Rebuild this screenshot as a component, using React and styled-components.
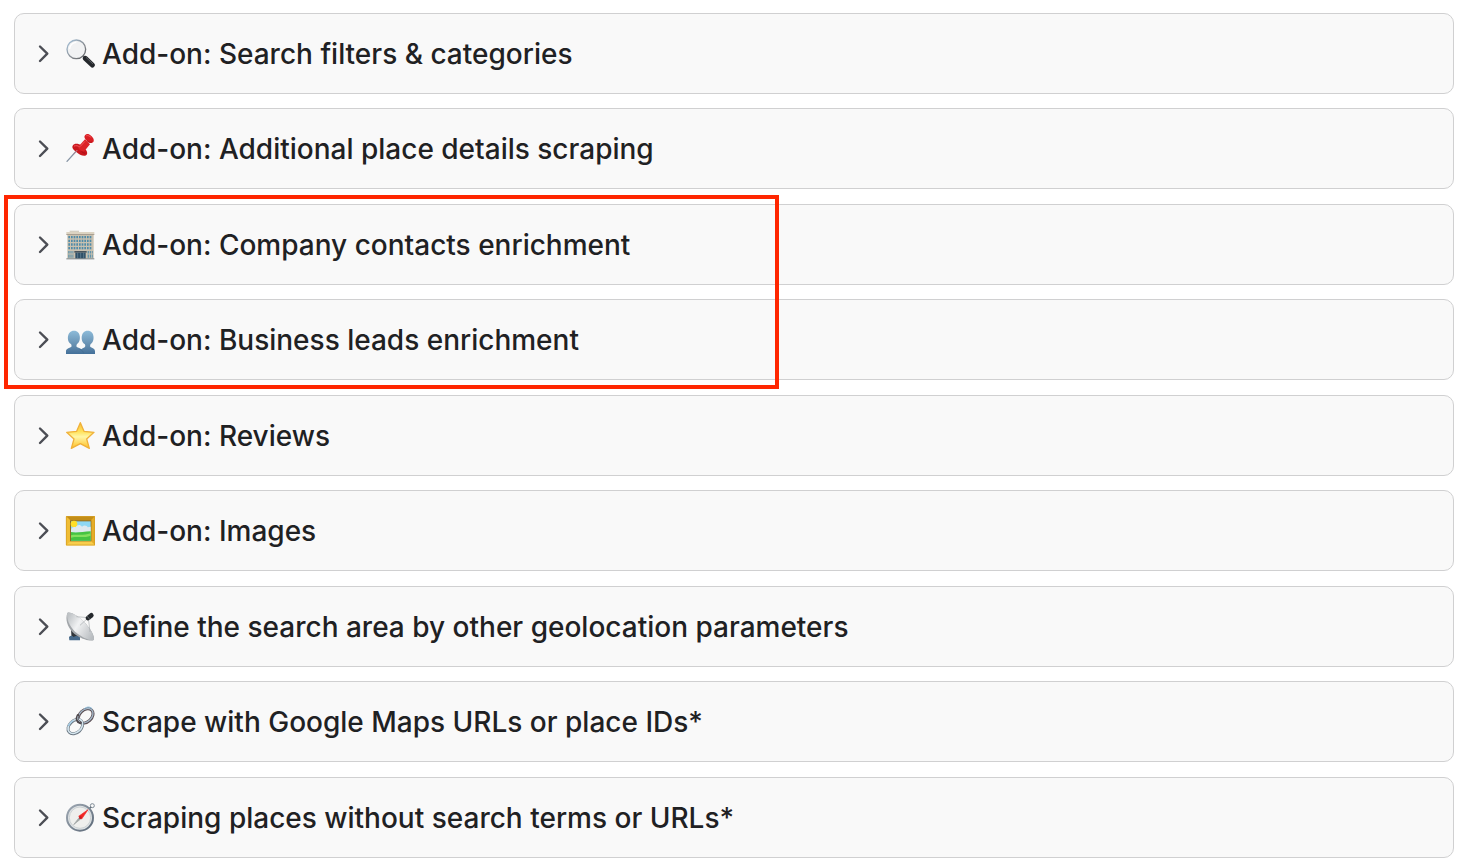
import React, { useState } from "react";
import styled, { createGlobalStyle } from "styled-components";

const GlobalStyle = createGlobalStyle`
  body {
    margin: 0;
    background-color: #ffffff;
    font-family: "Inter", "Liberation Sans", sans-serif;
  }
`;

const Page = styled.main`
  display: flex;
  flex-direction: column;
  gap: 15px;
  padding: 13px 16px 9px 14px;
`;

const Group = styled.section`
  position: relative;
  display: flex;
  flex-direction: column;
  gap: 14px;
`;

const Highlight = styled.div`
  position: absolute;
  top: -9px;
  bottom: -9px;
  left: -10px;
  width: 775px;
  max-width: 100%;
  box-sizing: border-box;
  border: 4px solid #ff2600;
  pointer-events: none;
`;

const SectionButton = styled.button`
  display: flex;
  align-items: center;
  width: 100%;
  min-height: 81px;
  padding: 0 22px;
  box-sizing: border-box;
  border: 1px solid #d0d0d1;
  border-radius: 10px;
  background-color: #f9f9f9;
  color: #1f2123;
  font-family: inherit;
  text-align: left;
  cursor: pointer;
`;

const Chevron = styled.svg`
  flex: none;
  width: 12px;
  height: 19px;
  margin-right: 16px;
  fill: none;
  stroke: #4c4e55;
  stroke-width: 2.4;
  stroke-linecap: round;
  stroke-linejoin: round;
  transform: ${({ $open }) => ($open ? "rotate(90deg)" : "none")};
`;

const Icon = styled.svg`
  flex: none;
  width: 30px;
  height: 31px;
  margin-right: 7px;
`;

const Title = styled.span`
  font-size: 28px;
  font-weight: 500;
  line-height: 36px;
`;

const icons = {
  search: (
    <>
      <defs>
        <linearGradient id="rim" x1="0" y1="0" x2="1" y2="1">
          <stop offset="0" stopColor="#a9c6de" />
          <stop offset="0.6" stopColor="#85898e" />
          <stop offset="1" stopColor="#595c60" />
        </linearGradient>
      </defs>
      <path d="M52 52L62 61" stroke="#77797c" strokeWidth="6" />
      <path d="M61 61L82 81" stroke="#25282c" strokeWidth="15" strokeLinecap="round" />
      <path d="M64 59L83 77" stroke="#5d6166" strokeWidth="3" strokeLinecap="round" />
      <circle cx="34" cy="34" r="28" fill="#f1f2f3" stroke="url(#rim)" strokeWidth="4" />
      <path d="M14 33a20 20 0 0 1 20-20" fill="none" stroke="#ffffff" strokeWidth="4" />
    </>
  ),
  pin: (
    <>
      <path d="M6 85L37 51" stroke="#8795a5" strokeWidth="4" strokeLinecap="round" />
      <path d="M23 38c5-8 17-7 27 0l13 13c6 8 4 16-3 17-9 1-18-4-26-11S20 45 23 38z" fill="#c9171d" />
      <path d="M39 42L60 19l15 15-17 21c-8 1-17-4-19-13z" fill="#dc2428" />
      <path d="M60 7c5-6 12-4 18 1 8 6 11 15 6 20-5 4-13 1-19-5S56 12 60 7z" fill="#d91e24" />
      <path d="M65 8c5-1 9 1 13 5M46 40l13-14M28 39c6-2 10-1 15 2" fill="none" stroke="#f4565b" strokeWidth="3" strokeLinecap="round" />
      <path d="M50 56c4 3 8 5 11 5M67 24c4 4 8 5 13 3" fill="none" stroke="#a90d14" strokeWidth="3" />
      <path d="M25 64L37 51" stroke="#b68a96" strokeWidth="3" />
    </>
  ),
  building: (
    <>
      <path d="M14 5h28v5H14z" fill="#d5cfc2" />
      <path d="M4 9h84v8H4z" fill="#dcd3c2" />
      <path d="M7 16h79v73H7z" fill="#c9c1b0" />
      {[21, 32, 43, 54].map((y) => (
        <g key={y}>
          {[10, 18, 26, 34, 42, 50, 58, 66, 74].map((x) => (
            <path key={x} d={`M${x} ${y}h5v7h-5z`} fill="#4f8ba9" />
          ))}
        </g>
      ))}
      <path d="M4 15h84v2H4z" fill="#958b7d" />
      <path d="M28 66h37v5H28z" fill="#47545d" />
      <path d="M31 71h31v18H31z" fill="#2f5067" />
      <path d="M38 71v18M47 71v18M56 71v18" stroke="#6f8d9e" strokeWidth="2" />
      <path d="M10 66h15v20H10zM68 66h15v20H68z" fill="#4f8ba9" />
      <path d="M15 66v21M21 66v21M73 66v21M79 66v21M9 75h17M67 75h17" stroke="#c9c1b0" strokeWidth="3" />
      <path d="M4 88h84v3H4z" fill="#7b8487" />
    </>
  ),
  people: (
    <>
      <defs>
        <linearGradient id="person" x1="0" y1="20" x2="0" y2="91" gradientUnits="userSpaceOnUse">
          <stop offset="0" stopColor="#8dbbd9" />
          <stop offset="0.65" stopColor="#628bad" />
          <stop offset="1" stopColor="#426f99" />
        </linearGradient>
      </defs>
      <path
        d="M3 90v-8c0-7 8-9 14-12 4-2 3-6 1-10C4 53 5 20 27 20s22 33 9 40c-2 4-3 8 1 10 10 4 18 6 19 20z"
        fill="url(#person)"
      />
      <path
        d="M47 78c3-5 9-5 12-8 3-3 2-7 0-10-13-7-13-40 9-40s22 33 9 40c-2 4-3 8 1 10 6 3 12 5 12 12v8H40z"
        fill="url(#person)"
      />
      <path d="M43 75c8 3 12 7 13 14" fill="none" stroke="#426b91" strokeWidth="2" />
    </>
  ),
  star: (
    <>
      <defs>
        <linearGradient id="gold" x1="0" y1="0" x2="0" y2="1">
          <stop offset="0" stopColor="#fbc13a" />
          <stop offset="0.35" stopColor="#ffe25c" />
          <stop offset="0.55" stopColor="#fff6a6" />
          <stop offset="1" stopColor="#ffc024" />
        </linearGradient>
      </defs>
      <path
        d="M46 8L57 34L87 37L65 57L73 85L46 71L19 85L27 57L5 37L35 34Z"
        fill="url(#gold)"
        stroke="#f0b13a"
        strokeWidth="4"
        strokeLinejoin="round"
      />
    </>
  ),
  picture: (
    <>
      <path d="M3 4h87v87H3z" fill="#f0b92b" />
      <path d="M3 4h87L77 17H17z" fill="#c28d18" />
      <path d="M3 4l14 13v60L3 91z" fill="#f0bd35" />
      <path d="M90 4L77 17v60l13 14z" fill="#e5ac27" />
      <path d="M3 91l14-14h60l13 14z" fill="#f8cd4c" />
      <path d="M15 16h64v63H15z" fill="#8c6b20" />
      <path d="M18 19h59v58H18z" fill="#8ed8f3" />
      <circle cx="27" cy="27" r="10" fill="#ffdf27" />
      <path d="M18 46c0-8 8-12 14-9 5-9 14-9 19-2 6-6 15-4 17 2l9-2v18H18z" fill="#dfe9ee" />
      <path d="M18 51c13 3 35 0 59-2v28H18z" fill="#45c342" />
      <path d="M18 61c16-5 31 3 59-6v7c-22 8-41 1-59 6z" fill="#83e05d" />
      <path d="M4 5h85v85H4z" fill="none" stroke="#d29a20" strokeWidth="2" />
    </>
  ),
  dish: (
    <>
      <defs>
        <linearGradient id="bowl" x1="0" y1="0.2" x2="1" y2="0.8">
          <stop offset="0" stopColor="#bfc3c6" />
          <stop offset="0.4" stopColor="#f1f2f3" />
          <stop offset="1" stopColor="#b8bcc0" />
        </linearGradient>
      </defs>
      <path d="M18 54h22l2 32H20z" fill="#30353a" />
      <path d="M12 78c5-6 10-4 14 0 6-5 13-3 19 1v9H13z" fill="#46698a" />
      <path d="M7 6C-1 27 9 58 36 74c19 12 44 18 50 13 6-11-14-42-37-62C31 10 13 1 7 6z" fill="#a2a6aa" />
      <path d="M7 6C3 24 15 49 36 67c20 16 45 25 50 19 5-8-14-41-37-61C31 10 13 1 7 6z" fill="url(#bowl)" />
      <path d="M45 43L70 20M34 17l36 3M70 20l5 43" fill="none" stroke="#a6aaae" strokeWidth="2" />
      <path d="M69 21L79 13" stroke="#25292d" strokeWidth="14" strokeLinecap="round" />
      <path d="M66 15l9 11" stroke="#777d83" strokeWidth="2" />
    </>
  ),
  link: (
    <>
      <g fill="none">
        <ellipse cx="62" cy="30" rx="25" ry="18" transform="rotate(-43 62 30)" stroke="#594b50" strokeWidth="9" />
        <ellipse cx="62" cy="29" rx="25" ry="18" transform="rotate(-43 62 29)" stroke="#a5b8c8" strokeWidth="4" />
        <ellipse cx="31" cy="62" rx="25" ry="18" transform="rotate(-43 31 62)" stroke="#687580" strokeWidth="9" />
        <ellipse cx="31" cy="61" rx="25" ry="18" transform="rotate(-43 31 61)" stroke="#d6e6ef" strokeWidth="5" />
        <path d="M39 29c-5 10-3 18 7 21" stroke="#4e474c" strokeWidth="9" strokeLinecap="round" />
        <path d="M39 31c-3 8-1 13 6 16" stroke="#a5b3bf" strokeWidth="3" strokeLinecap="round" />
        <path d="M58 8c9-7 18-6 24 1M10 60c4-8 9-13 15-16" stroke="#85bce0" strokeWidth="3" />
      </g>
    </>
  ),
  compass: (
    <>
      <defs>
        <linearGradient id="case" x1="0" y1="0" x2="1" y2="1">
          <stop offset="0" stopColor="#a0aab5" />
          <stop offset="0.5" stopColor="#7f8a96" />
          <stop offset="1" stopColor="#5a6777" />
        </linearGradient>
      </defs>
      <circle cx="82" cy="11" r="6" fill="none" stroke="#7d8994" strokeWidth="3" />
      <path d="M73 20l5-5" stroke="#66727e" strokeWidth="5" />
      <circle cx="45" cy="47" r="39" fill="#dfe3e5" stroke="url(#case)" strokeWidth="6" />
      <circle cx="45" cy="47" r="32" fill="#efefed" stroke="#ccd1d3" strokeWidth="3" />
      <path d="M41 43L69 23L50 51Z" fill="#f22624" stroke="#f22624" strokeWidth="2" strokeLinejoin="round" />
      <path d="M43 46L26 68L48 50Z" fill="#a0a5a4" stroke="#a0a5a4" strokeWidth="2" strokeLinejoin="round" />
      <circle cx="46" cy="47" r="4" fill="#c61c20" />
    </>
  ),
};

const groups = [
  {
    sections: [
      { icon: "search", title: "Add-on: Search filters & categories" },
      { icon: "pin", title: "Add-on: Additional place details scraping" },
    ],
  },
  {
    highlighted: true,
    sections: [
      { icon: "building", title: "Add-on: Company contacts enrichment" },
      { icon: "people", title: "Add-on: Business leads enrichment" },
    ],
  },
  {
    sections: [
      { icon: "star", title: "Add-on: Reviews" },
      { icon: "picture", title: "Add-on: Images" },
    ],
  },
  {
    sections: [
      { icon: "dish", title: "Define the search area by other geolocation parameters" },
      { icon: "link", title: "Scrape with Google Maps URLs or place IDs*" },
    ],
  },
  {
    sections: [{ icon: "compass", title: "Scraping places without search terms or URLs*" }],
  },
];

function Section({ icon, title }) {
  const [open, setOpen] = useState(false);

  return (
    <SectionButton type="button" aria-expanded={open} onClick={() => setOpen(!open)}>
      <Chevron $open={open} viewBox="0 0 12 19" aria-hidden="true">
        <path d="M3 2.5L10.3 9.7L3 17" />
      </Chevron>
      <Icon viewBox="0 0 90 93" aria-hidden="true">
        {icons[icon]}
      </Icon>
      <Title>{title}</Title>
    </SectionButton>
  );
}

function App() {
  return (
    <>
      <GlobalStyle />
      <Page>
        {groups.map((group) => (
          <Group key={group.sections[0].title}>
            {group.sections.map((section) => (
              <Section key={section.title} icon={section.icon} title={section.title} />
            ))}
            {group.highlighted && <Highlight />}
          </Group>
        ))}
      </Page>
    </>
  );
}

export default App;
